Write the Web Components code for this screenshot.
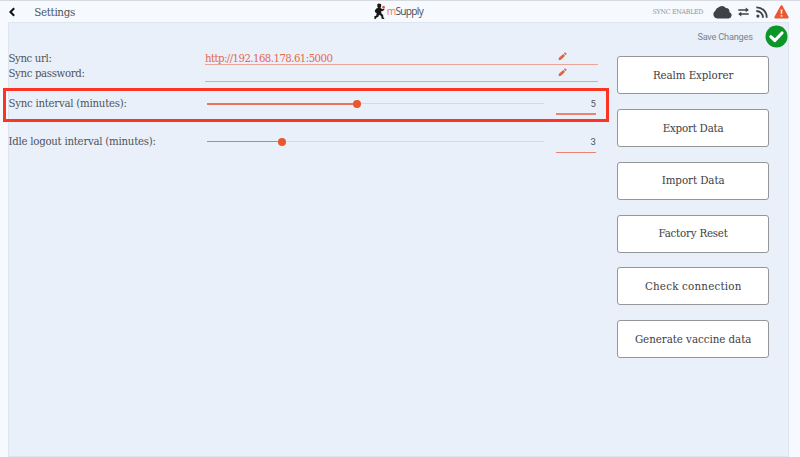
<!DOCTYPE html>
<html lang="en">
<head>
<meta charset="utf-8">
<title>Settings</title>
<style>
  html, body { margin: 0; height: 100%; overflow: hidden; background: #f6faff; }
  body { font-family: "DejaVu Serif", serif; font-size: 10px; color: #4f545a; }
</style>
</head>
<body>
<settings-page></settings-page>
<script>
const define = (name, html, setup) => {
  customElements.define(name, class extends HTMLElement {
    constructor() {
      super();
      const t = document.createElement('template');
      t.innerHTML = html;
      this.attachShadow({ mode: 'open' }).append(t.content.cloneNode(true));
    }
    connectedCallback() { if (setup) setup(this, this.shadowRoot); }
  });
};

// One line of text, tracked so that it fills the width given in its "w" attribute.
define('fit-text', `<style>
  :host { display: block; white-space: nowrap; flex: none; }
  span { display: inline-block; }
</style><span><slot></slot></span>`, (el, root) => {
  const w = parseFloat(el.getAttribute('w'));
  const span = root.querySelector('span');
  el.style.width = w + 'px';
  span.style.letterSpacing = '0px';
  const natural = span.getBoundingClientRect().width;
  const n = el.textContent.length;
  if (natural && n > 1) span.style.letterSpacing = ((w - natural) / (n - 1)) + 'px';
});

define('brand-logo', `<style>
  :host { display: flex; align-items: center; height: 21px; font: 10.2px/21px "Open Sans", sans-serif; color: #4b4b4d; }
  svg { display: block; margin-right: 1px; }
  b { font-weight: 400; color: #f0775c; }
</style>
<svg width="12" height="17" viewBox="0 0 12 17">
  <g fill="#171717">
    <path d="M3.4 1.6 4.2.6 7 .9 7.2 2.6 6.7 4.8 4.3 5.2 3.3 3.8z"/>
    <path d="M2.6 5.2 6.6 4.8 8.2 6.3 10.2 5.4 10.4 6.8 8.3 8.2 7.3 7.8 7.3 10.2 9.1 12.1 9.4 14.4 10.4 15.3 10 16 7.6 15.8 7.2 13 5.1 11.8 4.3 13.8 2.3 14.7 1.6 16.2.5 15.8.2 13.6 2.3 12.6 2.6 10.1 1.1 9.3.8 7.4z"/>
  </g>
  <circle cx="9.5" cy="4.2" r="1.4" fill="#ea593b"/>
</svg><fit-text w="37"><b>m</b>Supply</fit-text>`);

define('status-icons', `<style>
  :host { display: flex; align-items: center; height: 22px; }
  svg { display: block; flex: none; }
  .cloud { margin-left: 9px; } .swap { margin-left: 6px; } .feed { margin-left: 7px; } .warn { margin-left: 6px; }
  fit-text { font-size: 6.4px; line-height: 22px; color: #92969b; }
</style>
<fit-text w="51">SYNC ENABLED</fit-text>
<svg class="cloud" width="19" height="14" viewBox="0 0 19 14"><path fill="#3f4246" d="M4.6 13.5A4.2 4.2 0 0 1 2.3 5.8 5.5 5.5 0 0 1 6 2 5.2 5.2 0 0 1 12.9 3 4 4 0 0 1 16.5 7.3 3.2 3.2 0 0 1 15.5 13.5z"/></svg>
<svg class="swap" width="11" height="10" viewBox="0 0 11 10"><path fill="#3f4246" d="M.3 2.2H7.7V.6L10.9 3 7.7 5.3V3.7H.3zM10.7 6.3H3.3V4.7L.1 7.1 3.3 9.4V7.8H10.7z"/></svg>
<svg class="feed" width="12" height="12" viewBox="0 0 12 12"><g fill="none" stroke="#3f4246" stroke-width="1.8"><path d="M.3 1.3A10 10 0 0 1 10.7 11.7"/><path d="M.3 5A6.6 6.6 0 0 1 7 11.7"/></g><circle cx="1.9" cy="10.1" r="1.6" fill="#3f4246"/></svg>
<svg class="warn" width="15" height="14" viewBox="0 0 15 14"><path fill="#ea5733" d="M6.4 1.1Q7.5-.5 8.6 1.1L14.5 11.8Q15.1 13.5 13.5 13.6H1.5Q-.1 13.5.5 11.8z"/><path fill="#fbdcd2" d="M6.5 4.6H8.5L8.2 9H6.8zM6.6 10H8.4V11.8H6.6z"/></svg>`);

define('top-bar', `<style>
  :host { display: grid; grid-template-columns: 1fr auto 1fr; height: 22px; box-sizing: border-box; border-top: 1px solid #d6dade; padding: 0 11.5px 0 9px; }
  .left { display: flex; height: 22px; }
  .back { margin: 6px 19.3px 0 0; }
  .left fit-text { font-size: 10.4px; line-height: 22px; }
  brand-logo { margin: 0 0 0 0; }
  status-icons { justify-self: end; }
</style>
<div class="left"><svg class="back" width="6" height="10" viewBox="0 0 6 10"><path d="M5.2 1.2 1.4 5 5.2 8.8" fill="none" stroke="#111" stroke-width="2"/></svg><fit-text w="41">Settings</fit-text></div>
<brand-logo></brand-logo>
<status-icons></status-icons>`);

define('edit-row', `<style>
  :host { display: flex; height: var(--h); }
  .name { width: 196.5px; flex: none; }
  .field { width: 393.5px; box-sizing: border-box; border-bottom: 1px solid #eda397; display: flex; color: #e5694b; }
  .value { flex: 1; }
  svg { display: block; margin: var(--pen) 31px 0 0; }
  .name, .value { line-height: var(--line); }
</style>
<div class="name"><slot name="label"></slot></div>
<div class="field"><div class="value"><slot></slot></div><svg width="9" height="9" viewBox="0 0 9 9"><path fill="#e9603e" d="M.5 8.3 1 5.8 5.2 1.9 7.2 3.7 3 7.8zM5.8 1.4 6.7.6Q7.3.2 7.8.7L8.4 1.3Q8.8 1.9 8.3 2.5L7.7 3.1z"/></svg></div>`);

define('slider-row', `<style>
  :host { display: flex; height: 23px; line-height: var(--lh, 22px); }
  .name { width: 199px; flex: none; }
  .track { display: flex; align-items: center; width: 336.5px; height: 21px; flex: none; }
  .fill { height: var(--fill, 2px); background: #ea7459; }
  .knob { width: 8px; height: 8px; border-radius: 50%; background: #e9572f; margin: 0 -4px; z-index: 1; flex: none; }
  .rest { flex: 1; height: 1px; background: #d3dbe5; }
  .value { box-sizing: border-box; width: 39.5px; height: 22px; margin-left: 12.5px; border-bottom: var(--line, 2px) solid #ec8372; text-align: right; font: 9.5px/21px Roboto, sans-serif; }
</style>
<div class="name"><slot name="label"></slot></div>
<div class="track"><div class="fill"></div><div class="knob"></div><div class="rest"></div></div>
<div class="value"><slot></slot></div>`, (el, root) => {
  root.querySelector('.fill').style.width = el.getAttribute('at') + 'px';
});

define('action-button', `<style>
  :host { display: flex; align-items: center; justify-content: center; box-sizing: border-box; height: 38.2px; padding-bottom: 1px; background: #fff; border: 1px solid #949699; border-radius: 3px; color: #3e4042; font-size: 10.3px; }
</style><slot></slot>`);

define('save-control', `<style>
  :host { display: flex; align-items: center; justify-content: flex-end; height: 26px; margin-right: -19px; }
  fit-text { font: 9.2px/20px Roboto, sans-serif; color: #7b828b; margin-right: 12px; }
  svg { display: block; margin-top: -1px; }
</style><fit-text w="55.5">Save Changes</fit-text>
<svg width="23" height="23" viewBox="0 0 23 23"><circle cx="11.5" cy="11.5" r="11" fill="#0b9627"/><path d="M5.8 11.7 9.9 15.5 17 8" fill="none" stroke="#fff" stroke-width="3.1" stroke-linecap="round" stroke-linejoin="round"/></svg>`);

define('focus-frame', `<style>
  :host { position: absolute; left: 3px; top: 88px; width: 606px; height: 34px; box-sizing: border-box; border: 3px solid #fb3423; pointer-events: none; }
</style>`);

define('settings-page', `<style>
  :host { display: flex; flex-direction: column; height: 457px; width: 800px; }
  main { display: flex; flex: 1; box-sizing: border-box; margin: 0 11.5px 0 8px; border: 1px solid #dde5ee; background: #e9f0fa; }
  .form { width: 609px; margin-left: -.6px; flex: none; padding-top: 28px; }
  .form fit-text { font-size: 10.2px; }
  .side { width: 151.5px; padding-top: 1px; }
  .side action-button { margin-bottom: 14.55px; }
  save-control { margin-bottom: 6.3px; }
  .r1 { --h: 14px; --line: 15px; --pen: 1px; }
  .r2 { --h: 17px; --line: 17px; --pen: 3px; }
  .r3 { margin-top: 11px; }
  .r4 { margin-top: 15px; --line: 1.5px; --fill: 1px; --lh: 21px; }
</style>
<top-bar></top-bar>
<main>
  <div class="form">
    <edit-row class="r1"><fit-text slot="label" w="43.5">Sync url:</fit-text><fit-text w="128">http://192.168.178.61:5000</fit-text></edit-row>
    <edit-row class="r2"><fit-text slot="label" w="76.5">Sync password:</fit-text></edit-row>
    <slider-row class="r3" at="149.5"><fit-text slot="label" w="118.5">Sync interval (minutes):</fit-text>5</slider-row>
    <slider-row class="r4" at="74.5"><fit-text slot="label" w="147.5">Idle logout interval (minutes):</fit-text>3</slider-row>
  </div>
  <div class="side">
    <save-control></save-control>
    <action-button><fit-text w="80.5">Realm Explorer</fit-text></action-button>
    <action-button><fit-text w="61">Export Data</fit-text></action-button>
    <action-button><fit-text w="63">Import Data</fit-text></action-button>
    <action-button><fit-text w="69.5">Factory Reset</fit-text></action-button>
    <action-button><fit-text w="96.5">Check connection</fit-text></action-button>
    <action-button><fit-text w="116.5">Generate vaccine data</fit-text></action-button>
  </div>
</main>
<focus-frame></focus-frame>`);
</script>
</body>
</html>
